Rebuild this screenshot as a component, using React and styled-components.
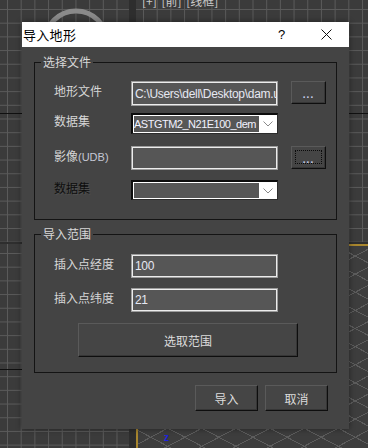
import React from "react";
import styled, { createGlobalStyle } from "styled-components";

const Global = createGlobalStyle`
  html, body { margin: 0; padding: 0; }
  body {
    width: 368px; height: 448px; overflow: hidden;
    background: #2c2c2c;
    font-family: "Noto Sans CJK SC", "Noto Sans", sans-serif;
  }
`;

const CJK = `"Noto Sans CJK SC", "Noto Sans", sans-serif`;
const LATIN = `"Liberation Sans", "Noto Sans CJK SC", sans-serif`;

const Desktop = styled.div`
  position: relative;
  width: 368px;
  height: 448px;
  display: grid;
  grid-template-columns: 129px 7px 1fr;
  grid-template-rows: 242px 2px 1fr;
  background: #2e2e2e;
  overflow: hidden;
`;

const gridBg = (axisY) => `
  background-color: #3b3b3b;
  background-image:
    linear-gradient(#101010, #101010),
    linear-gradient(#5a5a5a 1px, transparent 1px),
    linear-gradient(90deg, #5a5a5a 1px, transparent 1px);
  background-size: 100% 1px, 13.7px 13.7px, 13.7px 13.7px;
  background-position: 0 ${axisY}px, 0 9px, 7px 0;
  background-repeat: no-repeat, repeat, repeat;
`;

const Viewport = styled.div`
  position: relative;
  overflow: hidden;
  grid-column: ${(p) => p.$col};
  grid-row: ${(p) => p.$row};
  ${(p) => gridBg(p.$axis)}
`;

const PerspViewport = styled.div`
  position: relative;
  overflow: hidden;
  grid-column: 3;
  grid-row: 3;
  background-color: #3d3d3d;
  background-image:
    repeating-linear-gradient(28deg, transparent 0 15px, #5c5c5c 15px 16px),
    repeating-linear-gradient(-28deg, transparent 0 15px, #5c5c5c 15px 16px);
  border-left: 2px solid #a8862e;
  border-top: 2px solid #a8862e;
`;

const ViewLabel = styled.div`
  position: absolute;
  left: 6px;
  top: -8px;
  font: 12px ${CJK};
  color: #c8c8c8;
  white-space: nowrap;
  word-spacing: 2px;
`;

const AxisZ = styled.div`
  position: absolute;
  left: 26px;
  top: 186px;
  font: bold 10px ${LATIN};
  color: #1e22e0;
`;

const Sphere = styled.svg`
  position: absolute;
  left: 40px;
  top: 6px;
`;

const Dialog = styled.div`
  position: absolute;
  left: 22px;
  top: 22px;
  width: 327px;
  height: 407px;
  background: #444444;
  box-shadow: 0 0 6px rgba(0, 0, 0, 0.45);
  display: flex;
  flex-direction: column;
`;

const TitleBar = styled.div`
  height: 25px;
  flex: none;
  background: #ffffff;
  display: flex;
  align-items: center;
  padding-left: 1px;
`;

const TitleText = styled.div`
  flex: 1;
  font: 13px ${CJK};
  color: #000;
  letter-spacing: 0.3px;
`;

const TitleButton = styled.div`
  width: 45px;
  height: 25px;
  display: flex;
  align-items: center;
  justify-content: center;
  font: 13px ${LATIN};
  color: #000;
`;

const Body = styled.div`
  flex: 1;
  display: flex;
  flex-direction: column;
  padding: 8px 12px 18px 12px;
`;

const Group = styled.fieldset`
  margin: 0;
  margin-top: ${(p) => p.$mt || 0}px;
  padding: 0;
  min-width: 0;
  border: 1px solid #141414;
`;

const Legend = styled.legend`
  margin-left: 6px;
  padding: 0 2px;
  font: 12px/14px ${CJK};
  color: #d8d8d8;
`;

const GroupContent = styled.div`
  display: flex;
  flex-direction: column;
  padding: ${(p) => p.$pt}px 0 ${(p) => p.$pb}px 19px;
`;

const Row = styled.div`
  display: flex;
  align-items: flex-start;
  height: ${(p) => p.$h}px;
  margin-top: ${(p) => p.$mt || 0}px;
`;

const Label = styled.div`
  width: 77px;
  flex: none;
  align-self: center;
  margin-top: -6px;
  font: 12px ${CJK};
  color: ${(p) => (p.$disabled ? "#0e0e0e" : "#d6d6d6")};
  text-shadow: ${(p) => (p.$disabled ? "1px 1px 0 #505050" : "none")};
  white-space: nowrap;
`;

const Small = styled.span`
  font: 11px ${LATIN};
  color: #c4c8d4;
`;

const TextBox = styled.div`
  box-sizing: border-box;
  width: 147px;
  height: 100%;
  flex: none;
  border: 1px solid #9c9c9c;
  box-shadow: inset 0 0 0 1px #ececec;
  background: #565656;
  padding: 0 3px;
  display: flex;
  align-items: center;
  overflow: hidden;
  white-space: nowrap;
  font: 12px ${LATIN};
  letter-spacing: -0.3px;
  color: #e6e8f2;
`;

const SelectBox = styled.div`
  box-sizing: border-box;
  width: 147px;
  height: 100%;
  flex: none;
  display: flex;
  border-top: 2px solid #0c0c0c;
  border-left: 2px solid #0c0c0c;
  border-right: 1px solid #2c2c2c;
  border-bottom: 1px solid #2c2c2c;
  background: #ffffff;
  padding: 1px 0 1px 1px;
`;

const SelectValue = styled.div`
  flex: 1;
  background: #565656;
  display: flex;
  align-items: center;
  overflow: hidden;
  white-space: nowrap;
  font: 11px ${LATIN};
  letter-spacing: -0.5px;
  color: #f2f2ff;
`;

const SelectArrow = styled.div`
  width: 18px;
  flex: none;
  display: flex;
  align-items: center;
  justify-content: center;
`;

const Button = styled.button`
  box-sizing: border-box;
  position: relative;
  margin: 0;
  padding: 0;
  width: ${(p) => p.$w}px;
  height: ${(p) => p.$h}px;
  margin-left: ${(p) => p.$ml || 0}px;
  margin-top: ${(p) => p.$mt || 0}px;
  flex: none;
  background: #454545;
  border: 1px solid;
  border-color: #5a5a5a #0e0e0e #0e0e0e #5a5a5a;
  box-shadow: inset -1px -1px 0 #363636;
  color: #dcdcdc;
  font: 12px ${CJK};
  display: flex;
  align-items: center;
  justify-content: center;
  cursor: default;
`;

const Dots = styled.span`
  font: bold 10px ${LATIN};
  color: #c8d0ec;
  letter-spacing: 1px;
  margin-top: 3px;
`;

const FocusRing = styled.span`
  position: absolute;
  inset: 3px 3px 4px 3px;
  border: 1px dotted #0a0a0a;
`;

const Footer = styled.div`
  display: flex;
  justify-content: flex-end;
  gap: 7px;
  margin-top: 12px;
  padding-right: 9px;
`;

const Chevron = () => (
  <svg width="10" height="6" viewBox="0 0 10 6">
    <polyline points="0.5,0.5 5,5 9.5,0.5" fill="none" stroke="#8a8a8a" strokeWidth="1" />
  </svg>
);

export default function App() {
  return (
    <>
      <Global />
      <Desktop>
        <Viewport $col={1} $row={1} $axis={113}>
          <Sphere width="74" height="40" viewBox="0 0 74 40">
            <circle cx="36" cy="36" r="31" fill="none" stroke="#8a8a8a" strokeWidth="5" />
          </Sphere>
        </Viewport>
        <Viewport $col={3} $row={1} $axis={113}>
          <ViewLabel>[+] [前] [线框]</ViewLabel>
        </Viewport>
        <Viewport $col={1} $row={3} $axis={125} />
        <PerspViewport>
          <AxisZ>z</AxisZ>
        </PerspViewport>

        <Dialog>
          <TitleBar>
            <TitleText>导入地形</TitleText>
            <TitleButton>?</TitleButton>
            <TitleButton>
              <svg width="11" height="11" viewBox="0 0 11 11">
                <path d="M0.5 0.5 L10.5 10.5 M10.5 0.5 L0.5 10.5" stroke="#111" strokeWidth="1" />
              </svg>
            </TitleButton>
          </TitleBar>
          <Body>
            <Group>
              <Legend>选择文件</Legend>
              <GroupContent $pt={12} $pb={19}>
                <Row $h={25}>
                  <Label>地形文件</Label>
                  <TextBox>C:\Users\dell\Desktop\dam.udb</TextBox>
                  <Button $w={35} $h={23} $ml={13}>
                    <Dots>...</Dots>
                  </Button>
                </Row>
                <Row $h={21} $mt={7}>
                  <Label>数据集</Label>
                  <SelectBox>
                    <SelectValue>ASTGTM2_N21E100_dem</SelectValue>
                    <SelectArrow>
                      <Chevron />
                    </SelectArrow>
                  </SelectBox>
                </Row>
                <Row $h={24} $mt={12}>
                  <Label>
                    影像<Small>(UDB)</Small>
                  </Label>
                  <TextBox />
                  <Button $w={35} $h={23} $ml={13}>
                    <Dots>...</Dots>
                    <FocusRing />
                  </Button>
                </Row>
                <Row $h={20} $mt={10}>
                  <Label $disabled>数据集</Label>
                  <SelectBox>
                    <SelectValue />
                    <SelectArrow>
                      <Chevron />
                    </SelectArrow>
                  </SelectBox>
                </Row>
              </GroupContent>
            </Group>

            <Group $mt={7}>
              <Legend>导入范围</Legend>
              <GroupContent $pt={13} $pb={15}>
                <Row $h={24}>
                  <Label>插入点经度</Label>
                  <TextBox>100</TextBox>
                </Row>
                <Row $h={24} $mt={10}>
                  <Label>插入点纬度</Label>
                  <TextBox>21</TextBox>
                </Row>
                <Button $w={220} $h={34} $ml={24} $mt={11}>
                  选取范围
                </Button>
              </GroupContent>
            </Group>

            <Footer>
              <Button $w={63} $h={26}>导入</Button>
              <Button $w={63} $h={26}>取消</Button>
            </Footer>
          </Body>
        </Dialog>
      </Desktop>
    </>
  );
}
